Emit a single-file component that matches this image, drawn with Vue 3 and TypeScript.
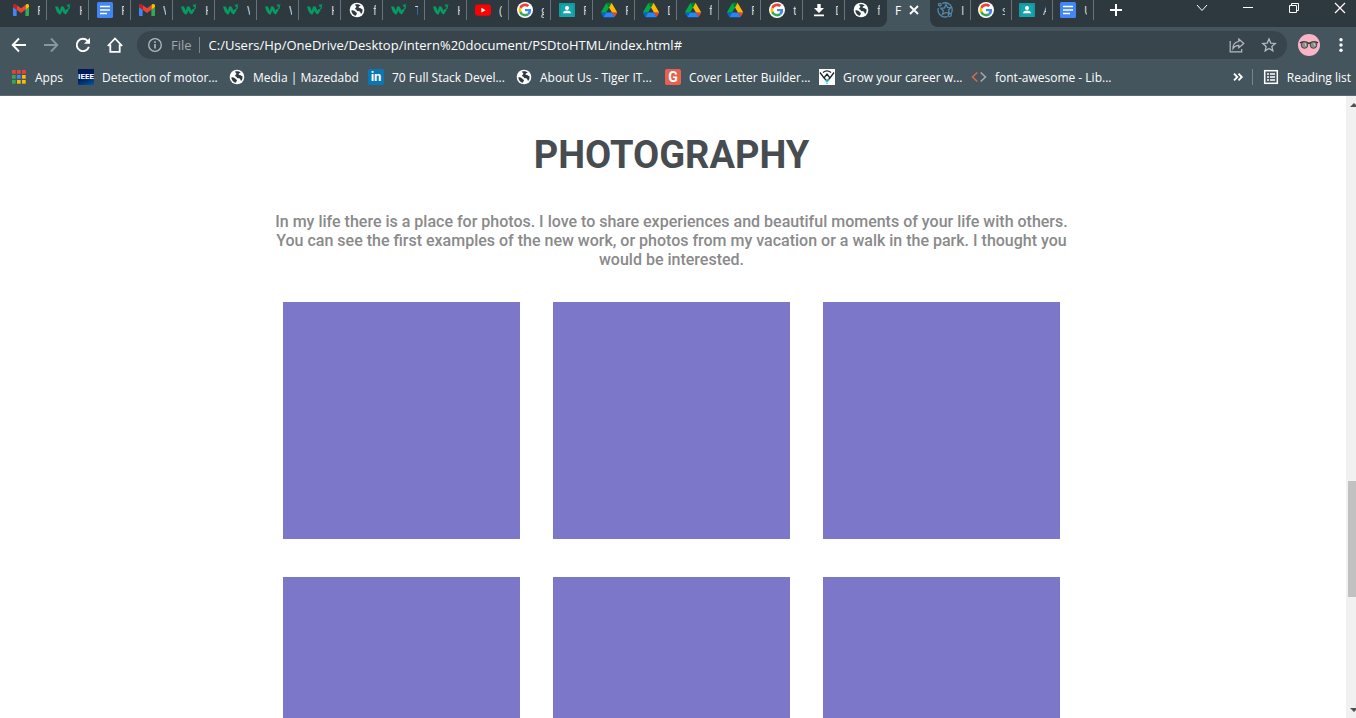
<script setup lang="ts">
interface Tab {
  icon: string
  title: string
}
interface Bookmark {
  icon: string
  label: string
  badge?: string
}

const leftTabs: Tab[] = [
  { icon: 'gmail', title: 'F' },
  { icon: 'w3', title: 'H' },
  { icon: 'docs', title: 'F' },
  { icon: 'gmail', title: 'W' },
  { icon: 'w3', title: 'H' },
  { icon: 'w3', title: 'W' },
  { icon: 'w3', title: 'W' },
  { icon: 'w3', title: 'H' },
  { icon: 'globe', title: 'f' },
  { icon: 'w3', title: 'T' },
  { icon: 'w3', title: 'H' },
  { icon: 'youtube', title: '(' },
  { icon: 'google', title: 'g' },
  { icon: 'classroom', title: 'F' },
  { icon: 'drive', title: 'F' },
  { icon: 'drive', title: 'D' },
  { icon: 'drive', title: 'f' },
  { icon: 'drive', title: 'F' },
  { icon: 'google', title: 't' },
  { icon: 'download', title: 'D' },
  { icon: 'globe', title: 'f' },
]

const rightTabs: Tab[] = [
  { icon: 'swirl', title: 'I' },
  { icon: 'google', title: 's' },
  { icon: 'classroom', title: 'A' },
  { icon: 'docs', title: 'U' },
]

const bookmarks: Bookmark[] = [
  { icon: 'apps', label: 'Apps' },
  { icon: 'ieee', label: 'Detection of motor...', badge: 'IEEE' },
  { icon: 'globe', label: 'Media | Mazedabd' },
  { icon: 'linkedin', label: '70 Full Stack Devel...', badge: 'in' },
  { icon: 'globe', label: 'About Us - Tiger IT...' },
  { icon: 'letter', label: 'Cover Letter Builder...', badge: 'G' },
  { icon: 'career', label: 'Grow your career w...' },
  { icon: 'code', label: 'font-awesome - Lib...' },
]

const address = 'C:/Users/Hp/OneDrive/Desktop/intern%20document/PSDtoHTML/index.html#'
const photos = [1, 2, 3, 4, 5, 6]
const appDots = ['#ea4335', '#ea4335', '#ea4335', '#34a853', '#4285f4', '#fbbc05', '#34a853', '#fbbc05', '#fbbc05']
</script>

<template>
  <svg class="sprite" aria-hidden="true">
    <symbol id="gmail" viewBox="52 36 88 78">
      <path fill="#4285f4" d="M58 108h14V74L52 59v43c0 3.300 2.700 6 6 6" />
      <path fill="#34a853" d="M120 108h14c3.300 0 6-2.700 6-6V59l-20 15" />
      <path fill="#fbbc04" d="M120 48v26l20-15v-8c0-7.400-8.500-11.600-14.400-7.200" />
      <path fill="#ea4335" d="M72 74V48l24 18 24-18v26L96 92" />
      <path fill="#c5221f" d="M52 51v8l20 15V48l-5.600-4.200C60.500 39.400 52 43.600 52 51" />
    </symbol>
    <symbol id="w3" viewBox="0 0 16 16">
      <path d="M0 4.500h3l1.800 4.300L6 4.500h2.500l2 4.300c.3-1 .8-1.700 2-2l1.300 1.400c-1.500.8-1.800 3.500-3.300 4.300-1.500-.7-2.500-2-3.300-4-.6 2-1 3.500-2.200 4.200C2.300 11.500 1 8.500 0 4.500z" fill="#069b63" />
      <path d="M11.800 3h2.700l-1.300 1.400c1.700 0 1.700 2.300-.2 2.400" fill="none" stroke="#069b63" stroke-width="1.200" />
    </symbol>
    <symbol id="docs" viewBox="0 0 16 16">
      <rect width="16" height="16" rx="1.500" fill="#4285f4" />
      <path d="M3 4.500h10M3 8h10M3 11.500h7" stroke="#fff" stroke-width="1.700" />
    </symbol>
    <symbol id="globe" viewBox="0 0 16 16">
      <circle cx="8" cy="8" r="7.300" fill="#fff" />
      <path fill="#2f3a41" d="M6 2.500c1.800-.7 4.200-.4 5.600.8-.3.900-1.300.9-2 1.500-.4.700.3 1.300 1.500 1.200 1 .1 1 1.200 2.200 1.100.6 1.800.1 3.500-1 4.700-.9-.2-.8-1.700-1.600-2.300-1.100-.5-2.500-.1-3-1.300-.3-1-1.500-.7-1.600-1.500 0-1 1.300-1 1.300-1.900 0-1-1.300-1.200-1.400-2.300z" />
      <path fill="#2f3a41" d="M2.300 8.300c1.500 0 3.300.2 3.900 1.300.4.900 1.700.9 1.800 1.700.1.900-1 1.100-1 2.500-2.500-.4-4.600-2.600-4.700-5.500z" />
    </symbol>
    <symbol id="youtube" viewBox="0 0 16 16">
      <rect y="2.500" width="16" height="11.300" rx="3" fill="#f00" />
      <path d="M6.400 5.700v4.900l4.200-2.450z" fill="#fff" />
    </symbol>
    <symbol id="google" viewBox="-6 -6 60 60">
      <circle cx="24" cy="24" r="30" fill="#fff" />
      <path fill="#ea4335" d="M24 9.500c3.540 0 6.710 1.220 9.210 3.600l6.850-6.850C35.900 2.380 30.470 0 24 0 14.620 0 6.510 5.380 2.560 13.220l7.980 6.190C12.430 13.720 17.740 9.500 24 9.500z" />
      <path fill="#4285f4" d="M46.980 24.550c0-1.570-.15-3.090-.38-4.550H24v9.020h12.940c-.58 2.960-2.260 5.480-4.780 7.180l7.730 6c4.510-4.180 7.090-10.360 7.090-17.650z" />
      <path fill="#fbbc05" d="M10.530 28.590c-.48-1.450-.76-2.990-.76-4.590s.27-3.140.76-4.590l-7.980-6.190C.92 16.460 0 20.120 0 24c0 3.880.92 7.540 2.560 10.780l7.970-6.190z" />
      <path fill="#34a853" d="M24 48c6.480 0 11.930-2.130 15.890-5.810l-7.730-6c-2.150 1.450-4.920 2.300-8.160 2.300-6.260 0-11.570-4.220-13.470-9.910l-7.980 6.190C6.510 42.620 14.620 48 24 48z" />
    </symbol>
    <symbol id="classroom" viewBox="0 0 16 16">
      <rect y="1" width="16" height="14" rx="1" fill="#16a5ad" />
      <path d="M1 14V2h14v12" fill="none" stroke="#0b8f97" />
      <circle cx="8" cy="6" r="2" fill="#fff" />
      <path d="M4 11.200c0-2 2.500-2.700 4-2.700s4 .7 4 2.700z" fill="#fff" />
    </symbol>
    <symbol id="drive" viewBox="0 -3 87 84">
      <path fill="#0066da" d="M6.600 66.850l3.850 6.650c.8 1.400 1.950 2.500 3.300 3.300L27.500 53H0c0 1.550.4 3.100 1.200 4.500z" />
      <path fill="#00ac47" d="M43.650 25L29.900 1.200c-1.350.8-2.500 1.900-3.300 3.300L1.200 48.500A9 9 0 0 0 0 53h27.500z" />
      <path fill="#ea4335" d="M73.550 76.800c1.350-.8 2.500-1.900 3.300-3.300l1.600-2.750 7.650-13.250c.8-1.400 1.200-2.950 1.200-4.500H59.800l5.850 11.500z" />
      <path fill="#00832d" d="M43.650 25L57.400 1.200C56.050.4 54.500 0 52.900 0H34.400c-1.600 0-3.150.45-4.500 1.200z" />
      <path fill="#2684fc" d="M59.800 53H27.500L13.750 76.800c1.350.8 2.900 1.200 4.500 1.200h50.800c1.600 0 3.150-.45 4.500-1.200z" />
      <path fill="#ffba00" d="M73.400 26.500L60.700 4.500c-.8-1.400-1.950-2.500-3.300-3.300L43.650 25 59.800 53h27.450c0-1.550-.4-3.100-1.200-4.500z" />
    </symbol>
    <symbol id="download" viewBox="0 0 16 16">
      <path d="M6.300 2h3.400v4H13l-5 5-5-5h3.300zM3 12.500h10v1.700H3z" fill="#fff" />
    </symbol>
    <symbol id="swirl" viewBox="0 0 16 16">
      <g fill="none" stroke="#5588a9" stroke-width="1.300">
        <path d="M5.200 1.500A7 7 0 0 1 15.200 8c0 1.500-.4 2.500-1.200 3.700M10.800 14.500C7 16 2.500 14 1.300 10c-.4-1.400-.3-2.600 0-3.800" />
        <path d="M9 2.500L7.500 5.800l-3.700.5 2.500 2.500-.8 3.500L9 10.500l3.300 1-.8-3.500 2.300-2.500-3.300-.2z" />
        <circle cx="2.800" cy="2.700" r="1.300" />
        <circle cx="12.800" cy="13" r="1.500" />
      </g>
    </symbol>
    <symbol id="apps" viewBox="0 0 16 16">
      <rect v-for="(color, i) in appDots" :key="i" :x="1 + (i % 3) * 5" :y="1 + Math.floor(i / 3) * 5" width="3.700" height="3.700" :fill="color" />
    </symbol>
    <symbol id="career" viewBox="0 0 16 16">
      <rect width="16" height="16" fill="#fff" />
      <path d="M1 3.500l4 5.500 3-4 3 4 4-5.500M4 3.500c2.500-2 5.500-2 8 0M5 9l3 3 3-3" fill="none" stroke="#17222b" stroke-width="1.300" />
      <path d="M8 11.500V15M6.500 11l1.500 2 2-2.500" fill="none" stroke="#37c6c0" stroke-width="1.300" />
    </symbol>
    <symbol id="code" viewBox="0 0 16 16">
      <path d="M6.300 3.500L1.500 8l4.800 4.500" fill="none" stroke="#d9694a" stroke-width="1.500" />
      <path d="M9.700 3.500L14.500 8l-4.800 4.500" fill="none" stroke="#a3abb0" stroke-width="1.500" />
    </symbol>
    <symbol id="back" viewBox="0 0 16 16">
      <path d="M15 8H2M8 1.500L1.700 8 8 14.500" fill="none" stroke="currentColor" stroke-width="1.900" />
    </symbol>
    <symbol id="forward" viewBox="0 0 16 16">
      <path d="M1 8h13M8 1.500L14.300 8 8 14.500" fill="none" stroke="currentColor" stroke-width="1.900" />
    </symbol>
    <symbol id="reload" viewBox="0 0 16 16">
      <path d="M13.900 9.800A6.200 6.200 0 1 1 12.600 3.800L14 5.300" fill="none" stroke="currentColor" stroke-width="1.900" />
      <path d="M15 .8v6H9z" fill="currentColor" />
    </symbol>
    <symbol id="home" viewBox="0 0 16 16">
      <path d="M.8 9L8 1.500 15.200 9M3.300 7.500v7.300h9.400V7.500" fill="none" stroke="currentColor" stroke-width="1.800" />
    </symbol>
    <symbol id="info" viewBox="0 0 16 16">
      <circle cx="8" cy="8" r="6.300" fill="none" stroke="currentColor" stroke-width="1.300" />
      <path d="M8 7v4.500M8 4.300v1.600" stroke="currentColor" stroke-width="1.600" />
    </symbol>
    <symbol id="share" viewBox="0 0 16 16">
      <path d="M1.200 4v10.800h11.500V12" fill="none" stroke="currentColor" stroke-width="1.200" />
      <path d="M9.800 2l5 4.500-5 4.300V8.300C7 8.200 5.300 9.300 4 11.500c0-3.500 2-6.500 5.800-7z" fill="none" stroke="currentColor" stroke-width="1.200" />
    </symbol>
    <symbol id="star" viewBox="0 0 16 16">
      <path d="M8 1.900l1.750 4.150 4.500.4-3.400 2.950 1 4.400L8 11.500l-3.850 2.300 1-4.400-3.400-2.950 4.500-.4z" fill="none" stroke="currentColor" stroke-width="1.300" />
    </symbol>
    <symbol id="menu" viewBox="0 0 16 16">
      <circle cx="8" cy="2.800" r="1.700" fill="currentColor" />
      <circle cx="8" cy="8" r="1.700" fill="currentColor" />
      <circle cx="8" cy="13.200" r="1.700" fill="currentColor" />
    </symbol>
    <symbol id="avatar" viewBox="0 0 22 22">
      <circle cx="11" cy="11" r="11" fill="#f9b4c8" />
      <path d="M2 9c2-1.500 5-1.500 9 .3C15 7.500 18 7.500 20 9" fill="none" stroke="#292525" stroke-width="1.300" />
      <circle cx="6.500" cy="11" r="3.300" fill="#8b8f8c" stroke="#4b4746" />
      <circle cx="15.500" cy="11" r="3.300" fill="#8b8f8c" stroke="#4b4746" />
      <path d="M7 9l1 3M16 9l1 3" stroke="#c9cbc8" />
    </symbol>
    <symbol id="reading" viewBox="0 0 16 16">
      <rect x="1.700" y="1.700" width="12.600" height="12.600" fill="none" stroke="currentColor" stroke-width="1.500" />
      <path d="M4 5h2M4 8h2M4 11h2M7 5h5M7 8h5M7 11h5" stroke="currentColor" stroke-width="1.600" />
    </symbol>
    <symbol id="more" viewBox="0 0 16 16">
      <path d="M4 4.700L7.300 8 4 11.300M8.500 4.700L11.800 8l-3.300 3.300" fill="none" stroke="currentColor" stroke-width="1.800" />
    </symbol>
    <symbol id="plus" viewBox="0 0 16 16">
      <path d="M8 2v12M2 8h12" stroke="currentColor" stroke-width="2" />
    </symbol>
    <symbol id="cross" viewBox="0 0 16 16">
      <path d="M4 4l8 8M12 4l-8 8" stroke="currentColor" stroke-width="1.800" />
    </symbol>
    <symbol id="chevron" viewBox="0 0 16 16">
      <path d="M3 5l5 5.500L13 5" fill="none" stroke="currentColor" />
    </symbol>
    <symbol id="minimize" viewBox="0 0 16 16">
      <path d="M3 7.500h10" stroke="currentColor" />
    </symbol>
    <symbol id="restore" viewBox="0 0 16 16">
      <path d="M3.500 5.500h7v7h-7zM5.500 5.500v-2h7v7h-2" fill="none" stroke="currentColor" />
    </symbol>
    <symbol id="close" viewBox="0 0 16 16">
      <path d="M3 3l10 10M13 3L3 13" stroke="currentColor" stroke-width="1.200" />
    </symbol>
  </svg>

  <div class="window">
    <header class="chrome">
      <div class="strip">
        <div class="tabs tabs-left">
          <button v-for="(tab, i) in leftTabs" :key="i" class="tab">
            <svg class="icon"><use :href="`#${tab.icon}`" /></svg>
            <span class="tab-title">{{ tab.title }}</span>
          </button>
        </div>
        <div class="active-tab">
          <span>F</span>
          <button aria-label="Close tab"><svg class="icon"><use href="#cross" /></svg></button>
        </div>
        <div class="tabs tabs-right">
          <button v-for="(tab, i) in rightTabs" :key="i" class="tab">
            <svg class="icon"><use :href="`#${tab.icon}`" /></svg>
            <span class="tab-title">{{ tab.title }}</span>
          </button>
          <button class="new-tab" aria-label="New tab"><svg class="icon"><use href="#plus" /></svg></button>
          <div class="window-controls">
            <button aria-label="Search tabs"><svg class="icon"><use href="#chevron" /></svg></button>
            <button aria-label="Minimize"><svg class="icon"><use href="#minimize" /></svg></button>
            <button aria-label="Restore"><svg class="icon"><use href="#restore" /></svg></button>
            <button aria-label="Close"><svg class="icon"><use href="#close" /></svg></button>
          </div>
        </div>
      </div>

      <div class="toolbar">
        <nav class="nav">
          <button aria-label="Back"><svg class="icon"><use href="#back" /></svg></button>
          <button aria-label="Forward" class="dim"><svg class="icon"><use href="#forward" /></svg></button>
          <button aria-label="Reload"><svg class="icon"><use href="#reload" /></svg></button>
          <button aria-label="Home"><svg class="icon"><use href="#home" /></svg></button>
        </nav>
        <div class="omnibox">
          <svg class="icon muted"><use href="#info" /></svg>
          <label class="scheme" for="address">File</label>
          <input id="address" class="address" type="text" :value="address" spellcheck="false" />
          <button class="muted" aria-label="Share"><svg class="icon"><use href="#share" /></svg></button>
          <button class="muted" aria-label="Bookmark"><svg class="icon"><use href="#star" /></svg></button>
        </div>
        <button class="profile" aria-label="Profile"><svg class="avatar"><use href="#avatar" /></svg></button>
        <button aria-label="Menu"><svg class="icon"><use href="#menu" /></svg></button>
      </div>

      <div class="bookmarks">
        <nav class="bookmark-list">
          <a v-for="mark in bookmarks" :key="mark.label" href="#" class="bookmark">
            <span v-if="mark.badge" class="badge" :class="mark.icon">{{ mark.badge }}</span>
            <svg v-else class="icon"><use :href="`#${mark.icon}`" /></svg>
            <span>{{ mark.label }}</span>
          </a>
        </nav>
        <button aria-label="More bookmarks"><svg class="icon"><use href="#more" /></svg></button>
        <button class="reading">
          <svg class="icon"><use href="#reading" /></svg>
          <span>Reading list</span>
        </button>
      </div>
    </header>

    <div class="viewport">
      <main class="page">
        <h1>PHOTOGRAPHY</h1>
        <p class="intro">
          In my life there is a place for photos. I love to share experiences and beautiful moments of your life with others.<br />
          You can see the first examples of the new work, or photos from my vacation or a walk in the park. I thought you<br />
          would be interested.
        </p>
        <div class="gallery">
          <div v-for="photo in photos" :key="photo" class="photo"></div>
        </div>
      </main>
      <div class="scrollbar" aria-hidden="true">
        <svg class="arrow" viewBox="0 0 10 17"><path d="M4 11l4-4 4 4z" /></svg>
        <div class="track-above"></div>
        <div class="thumb"></div>
        <div class="track-below"></div>
        <svg class="arrow" viewBox="0 0 10 17"><path d="M4 7l4 4 4-4z" /></svg>
      </div>
    </div>
  </div>
</template>

<style>
body {
  margin: 0;
  overflow: hidden;
}
</style>

<style scoped>
.sprite {
  position: absolute;
  width: 0;
  height: 0;
}
.window {
  display: flex;
  flex-direction: column;
  height: 100vh;
  overflow: hidden;
  background: #fff;
  font-family: "Segoe UI", "Open Sans", "Noto Sans", sans-serif;
  font-size: 12px;
}
button {
  display: flex;
  align-items: center;
  margin: 0;
  padding: 0;
  border: 0;
  background: none;
  color: inherit;
  font: inherit;
}
.icon {
  display: block;
  flex: none;
  width: 16px;
  height: 16px;
}
.chrome {
  flex: none;
  background: #45555e;
  border-bottom: 1px solid #5b6a73;
  color: #fff;
}
.strip {
  display: flex;
  height: 27px;
}
.tabs {
  display: flex;
  background: #2e383f;
}
.tabs-left {
  padding-left: 5px;
  border-bottom-right-radius: 8px;
}
.tabs-right {
  flex: 1;
  border-bottom-left-radius: 8px;
}
.tab {
  box-sizing: border-box;
  width: 42px;
  height: 20px;
  padding-left: 8px;
  gap: 8px;
  border-right: 1px solid #69737a;
}
.tabs-left .tab:last-child {
  border-right-color: transparent;
}
.tabs-right .tab {
  width: 41px;
  padding-left: 7px;
}
.tab-title {
  width: 3px;
  overflow: hidden;
  color: #d5dbde;
  font-size: 12px;
  text-align: left;
}
.active-tab {
  display: flex;
  align-items: center;
  gap: 5px;
  width: 35px;
  height: 20px;
  padding-left: 8px;
}
.new-tab {
  height: 20px;
  margin-left: 14px;
}
.window-controls {
  display: flex;
  gap: 30px;
  height: 15px;
  margin-left: auto;
  padding-right: 8px;
}
.toolbar {
  display: flex;
  align-items: center;
  height: 36px;
  padding-right: 7px;
}
.nav {
  display: flex;
  gap: 16px;
  padding: 0 14px 0 11px;
}
.dim {
  color: #8a969d;
}
.muted {
  color: #b3bbc0;
}
.omnibox {
  display: flex;
  flex: 1;
  align-items: center;
  gap: 16px;
  height: 28px;
  padding: 0 10px;
  border-radius: 14px;
  background: #39454c;
}
.scheme {
  margin-left: -8px;
  padding-right: 7px;
  border-right: 1px solid #78838a;
  color: #9ea8ae;
  font-size: 13px;
  line-height: 16px;
}
.address {
  flex: 1;
  min-width: 0;
  margin-left: -7px;
  padding: 0;
  border: 0;
  outline: 0;
  background: none;
  color: #fff;
  font-family: inherit;
  font-size: 13px;
}
.profile {
  margin: 0 13px 0 11px;
}
.avatar {
  display: block;
  width: 22px;
  height: 22px;
}
.bookmarks {
  display: flex;
  align-items: center;
  height: 28px;
  padding: 0 5px 4px 11px;
}
.bookmark-list {
  display: grid;
  flex: 1;
  grid-template-columns: 67px 151px 139px 148px 149px 154px 152px 1fr;
}
.bookmark {
  display: flex;
  align-items: center;
  gap: 8px;
  color: #fff;
  text-decoration: none;
  white-space: nowrap;
}
.badge {
  display: flex;
  flex: none;
  align-items: center;
  justify-content: center;
  width: 16px;
  height: 16px;
  border-radius: 2px;
  font-family: Roboto, sans-serif;
  font-weight: 700;
  line-height: 16px;
}
.ieee {
  border-radius: 0;
  background: linear-gradient(160deg, #001a5c 50%, #005a9c);
  font-size: 8px;
}
.linkedin {
  background: #0a77b5;
  font-size: 13px;
}
.letter {
  background: #e8614c;
  font-size: 14px;
}
.reading {
  gap: 8px;
  height: 16px;
  margin-left: 6px;
  padding-left: 10px;
  border-left: 1px solid #78838a;
  white-space: nowrap;
}
.viewport {
  display: flex;
  flex: 1;
  min-height: 0;
}
.page {
  display: flex;
  flex: 1;
  flex-direction: column;
  align-items: center;
  padding: 35px 3px 0 0;
  overflow: hidden;
  font-family: Bahnschrift, Roboto, sans-serif;
}
h1 {
  margin: 0;
  color: #464c50;
  font-size: 38px;
  font-weight: 700;
  line-height: 48px;
}
.intro {
  margin: 33px 0;
  color: #8a8a8a;
  font-size: 16px;
  font-weight: 500;
  line-height: 19px;
  text-align: center;
  white-space: nowrap;
}
.gallery {
  display: grid;
  grid-template-columns: repeat(3, 237px);
  gap: 38px 33px;
}
.photo {
  aspect-ratio: 1;
  background: #7d77c9;
}
.scrollbar {
  display: flex;
  flex: none;
  flex-direction: column;
  width: 10px;
  background: #f1f1f1;
}
.arrow {
  flex: none;
  width: 10px;
  height: 17px;
  fill: #505050;
}
.track-above {
  flex: 368;
}
.thumb {
  flex: 116;
  margin-left: 2px;
  background: #c1c1c1;
}
.track-below {
  flex: 104;
}
</style>
